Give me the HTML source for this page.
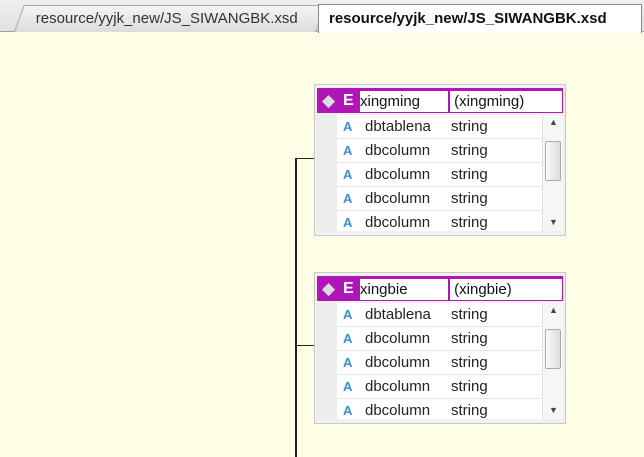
<!DOCTYPE html><html><head><style>
body{margin:0;width:644px;height:457px;background:#fefee6;position:relative;overflow:hidden;font-family:"Liberation Sans","DejaVu Sans",sans-serif}
.tabbar{position:absolute;left:0;top:0;width:644px;height:31px;background:linear-gradient(#f0f0f0,#e0e0e0);border-bottom:1px solid #a0a0a0}
.tab{position:absolute;top:5px;height:26px;font-size:15px;line-height:26px}
.t1{left:14px;width:300px;background:linear-gradient(#f4f4f4,#dcdcdc);border:1px solid #a8a8a8;border-bottom:none;transform:skewX(-20deg);transform-origin:bottom}
.t1 span,.t2 span{display:inline-block}
.t1 span{transform:skewX(20deg);padding-left:16px;color:#333}
.t2{left:318px;width:322px;background:#fff;border:1px solid #888;border-bottom:none;font-weight:bold;color:#111;top:4px;height:28px;line-height:28px}
.t2 span{padding-left:10px}
.box{position:absolute;left:314px;width:250px;height:150px;background:#f0f0f0;border:1px solid #c8c8c8}
.hd{position:absolute;left:2px;top:3px;width:246px;height:25px;background:#b015b8}
.hd .n{position:absolute;top:3px;height:21px;background:#fff;font-size:15px;line-height:22px;color:#111}
.rows{position:absolute;left:2px;top:30px;width:246px;height:116px;background:#fff;overflow:hidden}
.gut{position:absolute;left:0;top:0;width:20px;height:116px;background:#ececec}
.r{position:absolute;left:20px;width:204px;height:23px;border-bottom:1px solid #e6e6e6;font-size:15px;line-height:23px;color:#222}
.r i{position:absolute;left:6px;font-style:normal;font-weight:bold;color:#3a8ed6;font-size:13px}
.r b{position:absolute;left:28px;font-weight:normal}
.r em{position:absolute;left:114px;font-style:normal}
.sb{position:absolute;right:0;top:0;width:20px;height:116px;background:#f6f6f6;border-left:1px solid #e0e0e0}
.th{position:absolute;left:2px;top:26px;width:14px;height:38px;background:linear-gradient(90deg,#fafafa,#ddd);border:1px solid #aaa;border-radius:2px}
.ln{position:absolute;background:#222}
.dm{position:absolute;left:5px;top:3px;color:#ddd;font-size:17px;line-height:20px}
.e{position:absolute;left:26px;top:3px;color:#fff;font-size:16px;font-weight:bold;line-height:20px}
</style></head><body>
<div class="tabbar"><div class="tab t1"><span>resource/yyjk_new/JS_SIWANGBK.xsd</span></div><div class="tab t2"><span>resource/yyjk_new/JS_SIWANGBK.xsd</span></div></div>
<div class="ln" style="left:295px;top:158px;width:2px;height:299px"></div>
<div class="ln" style="left:295px;top:158px;width:19px;height:1px"></div>
<div class="ln" style="left:295px;top:345px;width:19px;height:1px"></div>

<div class="box" style="top:84px">
<div class="hd"><span class="dm">◆</span><span class="e">E</span>
<div class="n" style="left:43px;width:88px">xingming</div><div class="n" style="left:133px;width:112px">&nbsp;(xingming)</div></div>
<div class="rows"><div class="gut"></div>
<div class="r" style="top:0"><i>A</i><b>dbtablena</b><em>string</em></div>
<div class="r" style="top:24px"><i>A</i><b>dbcolumn</b><em>string</em></div>
<div class="r" style="top:48px"><i>A</i><b>dbcolumn</b><em>string</em></div>
<div class="r" style="top:72px"><i>A</i><b>dbcolumn</b><em>string</em></div>
<div class="r" style="top:96px"><i>A</i><b>dbcolumn</b><em>string</em></div>
<div class="sb"><span style="position:absolute;left:6px;top:2px;font-size:9px;color:#444">▲</span><div class="th"></div><span style="position:absolute;left:6px;top:102px;font-size:9px;color:#444">▼</span></div></div></div>

<div class="box" style="top:272px">
<div class="hd"><span class="dm">◆</span><span class="e">E</span>
<div class="n" style="left:43px;width:88px">xingbie</div><div class="n" style="left:133px;width:112px">&nbsp;(xingbie)</div></div>
<div class="rows"><div class="gut"></div>
<div class="r" style="top:0"><i>A</i><b>dbtablena</b><em>string</em></div>
<div class="r" style="top:24px"><i>A</i><b>dbcolumn</b><em>string</em></div>
<div class="r" style="top:48px"><i>A</i><b>dbcolumn</b><em>string</em></div>
<div class="r" style="top:72px"><i>A</i><b>dbcolumn</b><em>string</em></div>
<div class="r" style="top:96px"><i>A</i><b>dbcolumn</b><em>string</em></div>
<div class="sb"><span style="position:absolute;left:6px;top:2px;font-size:9px;color:#444">▲</span><div class="th"></div><span style="position:absolute;left:6px;top:102px;font-size:9px;color:#444">▼</span></div></div></div>
</body></html>
